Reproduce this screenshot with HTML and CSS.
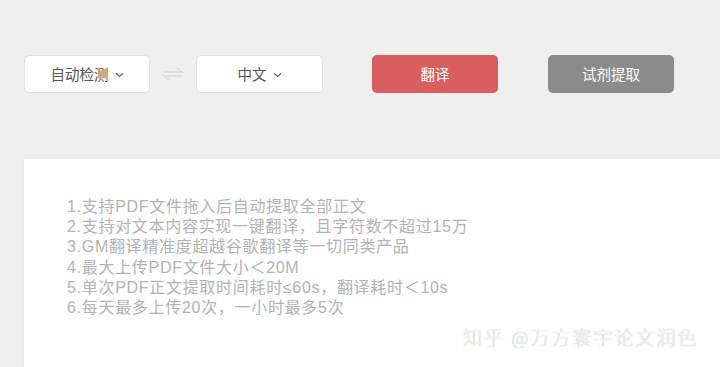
FILE: index.html
```html
<!DOCTYPE html>
<html lang="zh-CN">
<head>
<meta charset="utf-8">
<link rel="stylesheet" href="styles.css">
</head>
<body>
<div class="toolbar">
  <div class="select select-src">自动检测 <span class="chev"><svg width="9" height="6" viewBox="0 0 9 6"><path d="M1 1.2 L4.5 4.5 L8 1.2" fill="none" stroke="#666" stroke-width="1.2"/></svg></span></div>
  <div class="swap"><svg width="24" height="18" viewBox="0 0 24 18"><path d="M2 7 H21 L16 3" fill="none" stroke="#dcdcdc" stroke-width="1.6"/><path d="M22 11 H3 L8 15" fill="none" stroke="#dcdcdc" stroke-width="1.6"/></svg></div>
  <div class="select select-dst">中文 <span class="chev"><svg width="9" height="6" viewBox="0 0 9 6"><path d="M1 1.2 L4.5 4.5 L8 1.2" fill="none" stroke="#666" stroke-width="1.2"/></svg></span></div>
  <button class="btn btn-red">翻译</button>
  <button class="btn btn-gray">试剂提取</button>
</div>
<div class="panel">
  <ol class="notes">
    <li>1.支持PDF文件拖入后自动提取全部正文</li>
    <li>2.支持对文本内容实现一键翻译，且字符数不超过15万</li>
    <li>3.GM翻译精准度超越谷歌翻译等一切同类产品</li>
    <li>4.最大上传PDF文件大小＜20M</li>
    <li>5.单次PDF正文提取时间耗时≤60s，翻译耗时＜10s</li>
    <li>6.每天最多上传20次，一小时最多5次</li>
  </ol>
  <div class="watermark">知乎 @万方寰宇论文润色</div>
</div>
</body>
</html>
```
FILE: styles.css
```css
html, body {
  margin: 0;
  padding: 0;
}
body {
  background: #efefef;
  width: 720px;
  height: 367px;
  overflow: hidden;
  font-family: "Liberation Sans", "Noto Sans CJK SC", sans-serif;
}
.toolbar {
  display: flex;
  align-items: center;
  padding: 54px 0 0 24px;
  height: 39px;
}
.select {
  width: 126px;
  height: 38px;
  box-sizing: border-box;
  background: #fff;
  border: 1px solid #e2e2e2;
  border-radius: 5px;
  display: flex;
  align-items: center;
  justify-content: center;
  gap: 6px;
  font-size: 14.5px;
  color: #555;
}
.select-dst {
  width: 127px;
}
.chev {
  display: flex;
  padding-top: 2px;
}
.swap {
  width: 46px;
  display: flex;
  justify-content: center;
}
.btn {
  width: 126px;
  height: 38px;
  border: none;
  border-radius: 5px;
  color: #fff;
  font-family: "Noto Sans CJK SC", sans-serif;
  font-size: 14.5px;
  padding: 0;
}
.btn-red {
  background: #d95f5f;
  margin-left: 49px;
}
.btn-gray {
  background: #8b8b8b;
  margin-left: 50px;
}
.panel {
  margin: 66px 0 0 24px;
  background: #fff;
  height: 210px;
  box-shadow: 0 -1px 2px rgba(0,0,0,0.04);
  position: relative;
  padding: 38px 0 0 43px;
  box-sizing: border-box;
}
.notes {
  list-style: none;
  margin: 0;
  padding: 0;
  font-size: 16px;
  line-height: 20.2px;
  color: #b3b3b3;
  letter-spacing: 0.7px;
}
.watermark {
  position: absolute;
  left: 439px;
  top: 164px;
  font-family: "Noto Sans CJK SC", sans-serif;
  font-size: 19px;
  font-weight: 300;
  color: #f6f6f6;
  text-shadow: 0 0 1px #a8a8a8;
  letter-spacing: 2px;
}
```
